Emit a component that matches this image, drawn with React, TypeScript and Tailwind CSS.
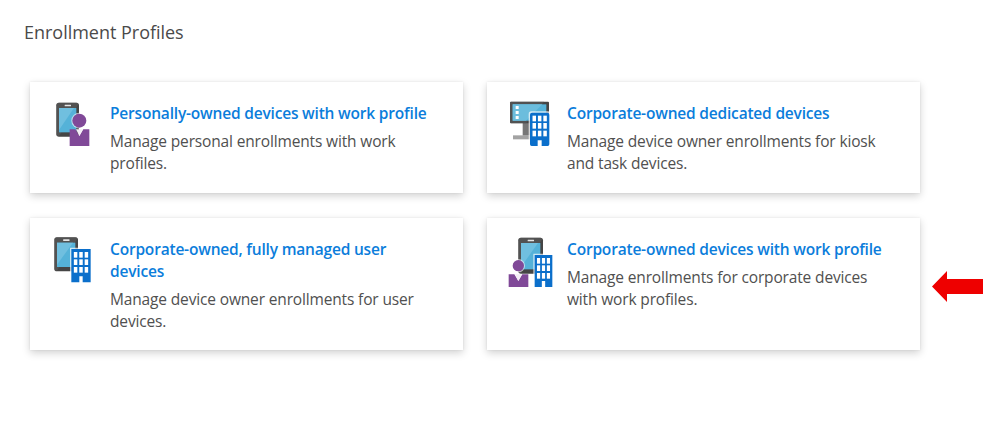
import type { ReactNode } from "react"

function Person({ x, y, r = 21 }: { x: number; y: number; r?: number }) {
  return (
    <g transform={`translate(${x} ${y})`}>
      <circle cx="28" cy="21" r={r + 3} fill="#fff" fillOpacity="0.6" />
      <circle cx="28" cy="21" r={r} fill="#804998" />
      <path d="M-1 47H16L28 67L40 47H58V97H-1Z" fill="#804998" />
      <path d="M18 47H39L28 67Z" fill="#f3edf6" />
    </g>
  )
}

function Phone({ x, y, w = 68, h = 102 }: { x: number; y: number; w?: number; h?: number }) {
  return (
    <g transform={`translate(${x} ${y})`}>
      <rect width={w} height={h} rx="8" fill="#454545" />
      <path d={`M8 0H${w - 8}Q${w - 3} 0 ${w - 2} 4L9 ${h - 3}Q0 ${h} 0 ${h - 8}V8Q0 0 8 0Z`} fill="#5b5b5b" fillOpacity="0.6" />
      <rect x="8" y="16" width={w - 16} height={h - 29} fill="#55b2d8" />
      <path d={`M8 16H${w - 15}L8 ${h - 20}Z`} fill="#70bfdf" />
      <rect x={w / 2 - 9} y="6" width="19" height="5" rx="1" fill="#e5e5e5" />
    </g>
  )
}

function Building({ x, y, rounded = false, w = 58, h = 100 }: { x: number; y: number; rounded?: boolean; w?: number; h?: number }) {
  const cols = [0.13, 0.41, 0.69]
  const rows = [9, 31, 54]
  return (
    <g transform={`translate(${x} ${y})`}>
      <rect x="-4" y="-4" width={w + 8} height={h + 5} rx={rounded ? 8 : 1} fill="#fff" fillOpacity="0.7" />
      <path
        d={
          rounded
            ? `M6 0H${w - 6}Q${w} 0 ${w} 6V${h - 5}Q${w} ${h} ${w - 5} ${h}H${w / 2 + 6}V${h - 17}H${w / 2 - 6}V${h}H5Q0 ${h} 0 ${h - 5}V6Q0 0 6 0Z`
            : `M0 0H${w}V${h}H${w / 2 + 5}V${h - 18}H${w / 2 - 5}V${h}H0Z`
        }
        fill="#0b6fcb"
      />
      {rows.map((row) =>
        cols.map((col) => <rect key={`${row}-${col}`} x={col * w} y={row} width={w * 0.18} height="17" fill="#fff" />)
      )}
    </g>
  )
}

function Monitor() {
  return (
    <g>
      <path d="M68 80H92V122H68Z" fill="#767676" />
      <path d="M39 121H92V133H39Z" fill="#a3a3a3" />
      <rect x="30" y="20" width="117" height="65" rx="3" fill="#454545" />
      <path d="M33 20H132L78 85H33Q30 85 30 82V23Q30 20 33 20Z" fill="#5b5b5b" fillOpacity="0.6" />
      <rect x="38" y="28" width="101" height="49" fill="#55b2d8" />
      <path d="M38 28H127L78 77H38Z" fill="#6cbddd" />
      <path d="M47 33h9v9h-9zM47 48h9v9h-9zM47 63h9v9h-9z" fill="#fff" />
    </g>
  )
}

interface ProfileCardProps {
  title: string
  description: string
  viewBox: string
  children: ReactNode
}

function ProfileCard({ title, description, viewBox, children }: ProfileCardProps) {
  return (
    <div className="flex bg-white pl-[15px] pr-6 pt-[13px] shadow-[0_3px_8px_rgba(0,0,0,0.18),0_0_2px_rgba(0,0,0,0.08)]">
      <svg className="h-[60px] w-[60px] shrink-0" viewBox={viewBox}>
        {children}
      </svg>
      <div className="pl-[5px] pt-[7px] text-[15.5px] leading-[22px]">
        <h2 className="font-semibold tracking-[-0.19px] text-[#0b7ddb]">{title}</h2>
        <p className="mt-1.5 tracking-[-0.15px] text-[#505050]">{description}</p>
      </div>
    </div>
  )
}

export default function App() {
  return (
    <main className="h-[427px] overflow-hidden bg-white pl-[30px] pt-[18px] font-['Open_Sans','Noto_Sans',sans-serif]">
      <h1 className="-ml-[6px] h-16 text-lg leading-7 tracking-[-0.02px] text-[#4a4a4a]">Enrollment Profiles</h1>
      <div className="flex items-end">
        <section className="grid w-[890px] shrink-0 grid-cols-2 grid-rows-[111px_132px] gap-x-6 gap-y-[25px]">
          <ProfileCard
            title="Personally-owned devices with work profile"
            description="Manage personal enrollments with work profiles."
            viewBox="0 0 180 180"
          >
            <Phone x={34} y={23} />
            <Person x={75} y={56} />
          </ProfileCard>
          <ProfileCard
            title="Corporate-owned dedicated devices"
            description="Manage device owner enrollments for kiosk and task devices."
            viewBox="6 0 180 180"
          >
            <Monitor />
            <Building x={90} y={53} rounded />
          </ProfileCard>
          <ProfileCard
            title="Corporate-owned, fully managed user devices"
            description="Manage device owner enrollments for user devices."
            viewBox="0 3 180 180"
          >
            <Phone x={28} y={22} w={71} />
            <Building x={79} y={57} />
          </ProfileCard>
          <ProfileCard
            title="Corporate-owned devices with work profile"
            description="Manage enrollments for corporate devices with work profiles."
            viewBox="6 3 180 180"
          >
            <Phone x={55} y={23} w={74} h={108} />
            <Person x={27} y={86} r={17} />
            <rect x="18" y="171" width="75" height="15" fill="#fff" />
            <Building x={104} y={75} w={53} h={96} />
          </ProfileCard>
        </section>
        <svg className="mb-12 ml-3 h-[31px] w-[51px]" viewBox="0 0 51 31">
          <path d="M0 15.5L15 0V8H51V23H15V31Z" fill="#ee0000" />
        </svg>
      </div>
    </main>
  )
}
